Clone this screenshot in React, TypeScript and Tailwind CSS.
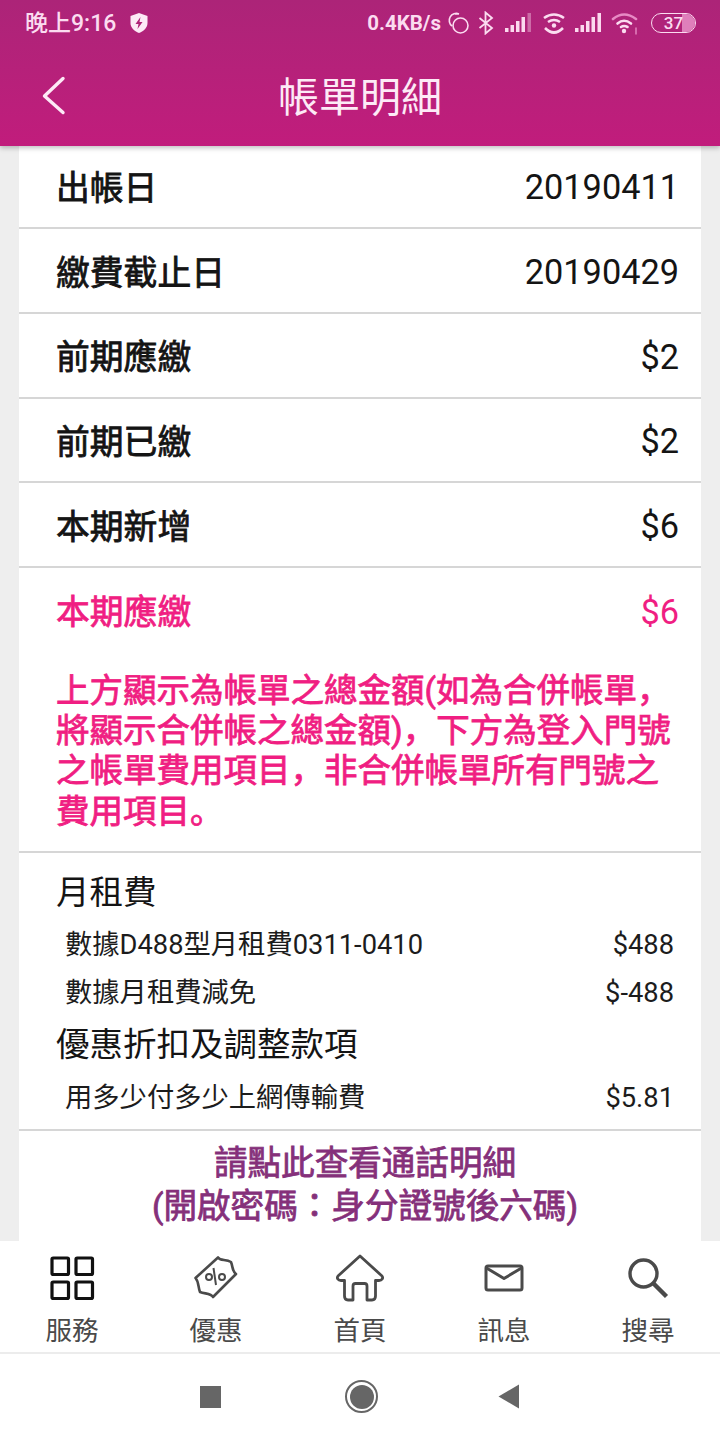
import type { ReactNode } from "react";

const font = { fontFamily: '"Roboto", "Noto Sans CJK SC", sans-serif' };

function SignalIcon({ fadedLast }: { fadedLast?: boolean }) {
    return (
        <svg width="27" height="20" viewBox="0 0 27 20" fill="#fbd9ee">
            <rect x="0" y="15" width="3.5" height="4" />
            <rect x="5.5" y="12" width="3.5" height="7" />
            <rect x="11" y="8" width="3.5" height="11" />
            <rect x="16.5" y="4" width="3.5" height="15" />
            <rect x="22.5" y="0" width="3.5" height="19" opacity={fadedLast ? 0.4 : 1} />
        </svg>
    );
}

function StatusBar() {
    return (
        <div className="flex h-[46px] items-center justify-between pl-[25px] pr-[24px] text-[#fbdcf0]">
            <div className="flex items-center">
                <span className="text-[23px] font-medium leading-none">晚上9:16</span>
                <svg className="ml-[13px]" width="20" height="22" viewBox="0 0 20 22">
                    <path d="M10 1 L18.5 4 V11 C18.5 15.5 15 19 10 21 C5 19 1.5 15.5 1.5 11 V4 Z" fill="#fdeaf6" />
                    <path d="M11.5 5 L6.5 12 H9.5 L8.5 17 L13.5 10 H10.5 Z" fill="#b02277" />
                </svg>
            </div>
            <div className="flex items-center">
                <span className="text-[20.5px] font-bold leading-none">0.4KB/s</span>
                <svg className="ml-[5px]" width="24" height="24" viewBox="0 0 24 24" fill="none" stroke="#fbdcf0" strokeWidth="1.6">
                    <circle cx="14.5" cy="14.5" r="7.5" />
                    <path d="M6 15 A7 7 0 0 1 13 3 M13 3 L9 3" />
                </svg>
                <svg className="ml-[8px]" width="16" height="24" viewBox="0 0 16 24" fill="none" stroke="#fbdcf0" strokeWidth="1.8">
                    <path d="M1.5 7 L14 17 L7.5 22.5 V1.5 L14 7 L1.5 17" />
                </svg>
                <span className="ml-[11px] flex"><SignalIcon fadedLast /></span>
                <svg className="ml-[10px]" width="24" height="24" viewBox="0 0 24 24" fill="none" stroke="#fbdcf0" strokeWidth="2.6">
                    <path d="M2 7 Q12 0 22 7" />
                    <path d="M6 11 Q12 7 18 11" />
                    <circle cx="12" cy="14.5" r="2.2" fill="#fbdcf0" stroke="none" />
                    <path d="M3 17 Q12 26 21 17" />
                </svg>
                <span className="ml-[9px] flex"><SignalIcon /></span>
                <svg className="ml-[9px]" width="28" height="24" viewBox="0 0 28 24" fill="none" strokeLinecap="round">
                    <path d="M2 8 Q13 -1 25 8" stroke="#e78ac4" strokeWidth="2.6" />
                    <path d="M6.5 12.5 Q13 7 20 12.5" stroke="#fbdcf0" strokeWidth="2.6" />
                    <path d="M10 16 Q13 14 16.5 16" stroke="#fbdcf0" strokeWidth="2.6" />
                    <circle cx="13" cy="20" r="2.2" fill="#fbdcf0" />
                    <path d="M25 17 V23" stroke="#e78ac4" strokeWidth="1.4" />
                </svg>
                <div className="relative ml-[12px] h-[20px] w-[45px] overflow-hidden rounded-[10px] border-[1.5px] border-[#fbdcf0]">
                    <div className="absolute right-0 top-0 h-full w-[13px] bg-[#df7fbb]" />
                    <span className="absolute inset-0 flex items-center justify-center text-[17px] font-medium leading-none">37</span>
                </div>
            </div>
        </div>
    );
}

function Header() {
    return (
        <div className="relative z-10 h-[146px] shrink-0 bg-gradient-to-b from-[#ac2478] to-[#c11c7c] shadow-[0_2px_5px_rgba(0,0,0,0.25)]">
            <StatusBar />
            <div className="relative flex h-[100px] items-center justify-center pt-[4px]">
                <svg className="absolute left-[41px] top-[30px]" width="26" height="40" viewBox="0 0 26 40" fill="none" stroke="#fdeaf6" strokeWidth="3.4" strokeLinecap="round" strokeLinejoin="round">
                    <path d="M22 2.5 L3.5 20 L22 36.5" />
                </svg>
                <span className="text-[41px] leading-none text-[#fdeaf6]">帳單明細</span>
            </div>
        </div>
    );
}

function BillRow({ label, value, pink }: { label: string; value: string; pink?: boolean }) {
    return (
        <div className={`flex h-[84.7px] items-center justify-between pl-[37px] pr-[22px] pt-[3px] ${pink ? "text-[#f01e82]" : "border-b-2 border-[#d6d6d6] text-[#141414]"}`}>
            <span className="pt-[3px] text-[33.8px] leading-none [-webkit-text-stroke:0.8px]">{label}</span>
            <span className="text-[34.3px] leading-none">{value}</span>
        </div>
    );
}

function FeeRow({ label, value, className }: { label: string; value: string; className: string }) {
    return (
        <div className={`flex items-center justify-between pl-[46px] pr-[27px] text-[27.3px] leading-none text-[#1c1c1c] ${className}`}>
            <span>{label}</span>
            <span>{value}</span>
        </div>
    );
}

function NavItem({ icon, label }: { icon: ReactNode; label: string }) {
    return (
        <div className="flex w-[144px] flex-col items-center">
            <div className="flex h-[72px] items-center justify-center pt-[2px]">{icon}</div>
            <span className="mt-[5px] text-[26.5px] leading-none text-[#4a4a4a]">{label}</span>
        </div>
    );
}

function BottomNav() {
    return (
        <div className="relative z-10 flex h-[113px] shrink-0 border-b-2 border-[#ececec] bg-white">
            <NavItem
                label="服務"
                icon={
                    <svg width="46" height="46" viewBox="0 0 46 46" fill="none" stroke="#111" strokeWidth="3.2" strokeLinejoin="round">
                        <rect x="3" y="3" width="16.5" height="16.5" rx="1.2" />
                        <rect x="27" y="3" width="16.5" height="16.5" rx="1.2" />
                        <rect x="3" y="27" width="16.5" height="16.5" rx="1.2" />
                        <rect x="27" y="27" width="16.5" height="16.5" rx="1.2" />
                    </svg>
                }
            />
            <NavItem
                label="優惠"
                icon={
                    <svg width="44" height="44" viewBox="0 0 44 44" fill="none" stroke="#4a4a4a" strokeWidth="2.6" strokeLinejoin="round">
                        <path d="M1.5 22 L24 1.5 C26 5 32 3 37 6 C39 11 38 15 42 18 L19 41 C17 37 11 38 6 36 C4 31 5 26 1.5 22 Z" />
                        <circle cx="15" cy="21" r="3" strokeWidth="2" />
                        <circle cx="28" cy="21" r="3" strokeWidth="2" />
                        <path d="M19.5 12 L22 29" strokeWidth="2" />
                    </svg>
                }
            />
            <NavItem
                label="首頁"
                icon={
                    <svg width="50" height="48" viewBox="0 0 50 48" fill="none" stroke="#4a4a4a" strokeWidth="2.8" strokeLinejoin="round">
                        <path d="M25 2 L47 22 C48.5 24 47 26.5 44 26.5 H40.5 V42 C40.5 44.5 39 46 37 46 H32 V32 C32 30.5 31 29.5 29.5 29.5 H20.5 C19 29.5 18 30.5 18 32 V46 H13 C11 46 9.5 44.5 9.5 42 V26.5 H6 C3 26.5 1.5 24 3 22 Z" />
                    </svg>
                }
            />
            <NavItem
                label="訊息"
                icon={
                    <svg width="40" height="28" viewBox="0 0 40 28" fill="none" stroke="#4a4a4a" strokeWidth="3" strokeLinejoin="round">
                        <rect x="2" y="2" width="36" height="24" rx="2" />
                        <path d="M2.5 4 L20 14.5 L37.5 4" />
                    </svg>
                }
            />
            <NavItem
                label="搜尋"
                icon={
                    <svg width="42" height="42" viewBox="0 0 42 42" fill="none" stroke="#4a4a4a" strokeWidth="3.4">
                        <circle cx="16.5" cy="16.5" r="13.5" />
                        <path d="M26 26 L39.5 39.5" strokeWidth="4.4" />
                    </svg>
                }
            />
        </div>
    );
}

function SystemNav() {
    return (
        <div className="flex h-[86px] shrink-0 items-center justify-center bg-white pb-[1px]">
            <div className="h-[22px] w-[21px] bg-[#666]" />
            <div className="ml-[124px] flex h-[33px] w-[33px] items-center justify-center rounded-full border-2 border-[#666]">
                <div className="h-[24px] w-[24px] rounded-full bg-[#666]" />
            </div>
            <svg className="ml-[120px]" width="22" height="25" viewBox="0 0 22 25">
                <path d="M0.5 12.5 L21 0.5 V24.5 Z" fill="#666" />
            </svg>
        </div>
    );
}

export default function App() {
    return (
        <div className="flex h-[1440px] w-[720px] flex-col overflow-hidden bg-[#eeeeee]" style={font}>
            <Header />
            <div className="mx-[19px] flex-1 overflow-hidden bg-white">
                <div className="-mt-[1.5px]">
                    <BillRow label="出帳日" value="20190411" />
                    <BillRow label="繳費截止日" value="20190429" />
                    <BillRow label="前期應繳" value="$2" />
                    <BillRow label="前期已繳" value="$2" />
                    <BillRow label="本期新增" value="$6" />
                    <BillRow label="本期應繳" value="$6" pink />
                </div>
                <div className="border-b-2 border-[#d6d6d6] pb-[19px] pl-[37px] pr-[20px] pt-[18px] text-[33.5px] leading-[40.3px] text-[#f01e82] [-webkit-text-stroke:0.8px]">
                    上方顯示為帳單之總金額(如為合併帳單，將顯示合併帳之總金額)，下方為登入門號之帳單費用項目，非合併帳單所有門號之費用項目。
                </div>
                <div className="border-b-2 border-[#d6d6d6] pb-[16px] pt-[23px]">
                    <div className="pl-[37px] text-[33.5px] leading-none text-[#141414]">月租費</div>
                    <FeeRow label="數據D488型月租費0311-0410" value="$488" className="mt-[23px]" />
                    <FeeRow label="數據月租費減免" value="$-488" className="mt-[20px]" />
                    <div className="mt-[21px] pl-[37px] text-[33.5px] leading-none text-[#141414]">優惠折扣及調整款項</div>
                    <FeeRow label="用多少付多少上網傳輸費" value="$5.81" className="mt-[24px]" />
                </div>
                <div className="pl-[10px] pt-[13px] text-center text-[33.6px] leading-[40.5px] text-[#85307a] [-webkit-text-stroke:0.8px]">
                    <div>請點此查看通話明細</div>
                    <div>(開啟密碼<span className="font-['Noto_Sans_CJK_TC']">：</span>身分證號後六碼)</div>
                </div>
            </div>
            <BottomNav />
            <SystemNav />
        </div>
    );
}
